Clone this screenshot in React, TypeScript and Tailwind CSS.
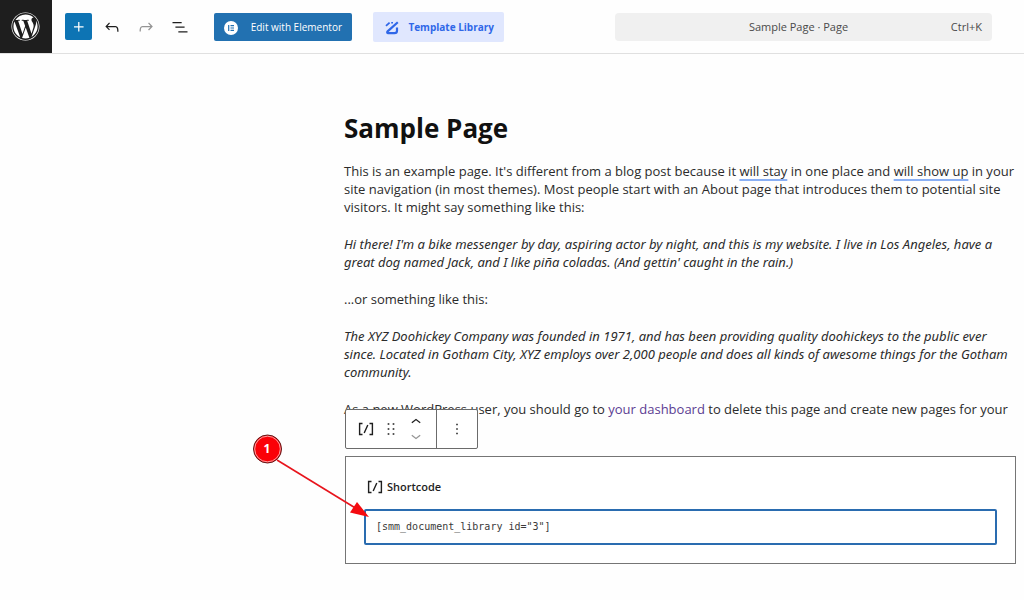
import type { ReactNode } from "react"
import { FaWordpress } from "react-icons/fa"

type IconProps = {
  path: string
  className?: string
}

const icons = {
  plus: "M11 12.5V17.5H12.5V12.5H17.5V11H12.5V6H11V11H6V12.5H11Z",
  undo: "M18.3 11.7c-.6-.6-1.4-.9-2.3-.9H6.7l2.9-3.3-1.1-1-4.5 5L8.5 16l1-1-2.7-2.7H16c.5 0 .9.2 1.3.5 1 1 1 3.4 1 4.5v.3h1.5v-.2c0-1.5 0-4.3-1.5-5.7z",
  redo: "M15.6 6.5l-1.1 1 2.9 3.3H8c-.9 0-1.7.3-2.3.9-1.4 1.5-1.4 4.2-1.4 5.6v.2h1.5v-.3c0-1.1 0-3.5 1-4.5.3-.3.7-.5 1.3-.5h9.2L14.5 15l1.1 1.1 4.6-4.6-4.6-5z",
  listView: "M3 6h11v1.5H3V6Zm3.5 5.5h11V13h-11v-1.5ZM21 17H10v1.5h11V17Z",
  drag: "M8 7h2V5H8v2zm0 6h2v-2H8v2zm0 6h2v-2H8v2zm6-14v2h2V5h-2zm0 8h2v-2h-2v2zm0 6h2v-2h-2v2z",
  up: "M6.5 12.4L12 8l5.5 4.4-.9 1.2L12 10l-4.5 3.6-1-1.2z",
  down: "M17.5 11.6L12 16l-5.5-4.4.9-1.2L12 14l4.5-3.6 1 1.2z",
  more: "M13 19h-2v-2h2v2zm0-6h-2v-2h2v2zm0-6h-2V5h2v2z",
}

function Icon({ path, className = "size-5" }: IconProps) {
  return (
    <svg viewBox="0 0 24 24" fill="currentColor" className={className} aria-hidden="true">
      <path d={path} />
    </svg>
  )
}

function ShortcodeIcon() {
  return (
    <svg viewBox="0 0 16 14" fill="none" stroke="currentColor" strokeWidth="1.4" className="h-3.5 w-4" aria-hidden="true">
      <path d="M4.5 1.5H1.6v11h2.9M11.5 1.5h2.9v11h-2.9M6.2 11l3.6-8" />
    </svg>
  )
}

function ElementorIcon() {
  return (
    <svg viewBox="0 0 14 14" className="size-3.5" aria-hidden="true">
      <circle cx="7" cy="7" r="7" fill="#fff" />
      <path d="M4.700 4v6M6.500 4.600h3.500M6.500 7h3.500M6.500 9.400h3.500" stroke="#2271b1" strokeWidth="1.2" />
    </svg>
  )
}

function TemplateIcon() {
  return (
    <svg viewBox="0 0 14 14" fill="none" stroke="currentColor" className="size-3.5" aria-hidden="true">
      <path d="M1 4.800L4.600 1.600" strokeWidth="1.800" />
      <path d="M6.200 1.800h1.800" strokeWidth="1.600" />
      <path d="M12.800 1.200L2.600 10.400c-.8.8-.4 1.800.6 1.800h6.200c1.600 0 2.600-1 2.600-2.400V6.600" strokeWidth="2.200" />
    </svg>
  )
}

function Paragraph({ children, italic = false }: { children: ReactNode; italic?: boolean }) {
  return <p className={italic ? "font-['Noto_Sans',sans-serif] italic" : ""}>{children}</p>
}

function Flagged({ children }: { children: ReactNode }) {
  return (
    <span className="underline decoration-[#8ab0f5] decoration-2 underline-offset-3 [text-decoration-skip-ink:none]">
      {children}
    </span>
  )
}

function Header() {
  return (
    <header className="flex h-[54px] items-center border-b border-[#e0e0e0]">
      <a href="#" aria-label="View Pages" className="flex w-[52px] shrink-0 items-center justify-center self-stretch bg-[#1e1e1e] pr-0.5 text-white">
        <FaWordpress className="size-[29px]" />
      </a>

      <div className="ml-[13px] flex items-center gap-3.5">
        <button type="button" aria-label="Block Inserter" className="-mr-1 flex size-[27px] items-center justify-center rounded-xs bg-[#0d74b4] text-white">
          <Icon path={icons.plus} />
        </button>
        <button type="button" aria-label="Undo" className="text-[#1e1e1e]">
          <Icon path={icons.undo} />
        </button>
        <button type="button" aria-label="Redo" className="text-[#949494]">
          <Icon path={icons.redo} />
        </button>
        <button type="button" aria-label="Document Overview" className="text-[#1e1e1e]">
          <Icon path={icons.listView} />
        </button>
      </div>

      <button type="button" className="ml-6 flex h-7 w-[138px] shrink-0 items-center justify-between rounded-xs bg-[#2271b1] px-2.5 pt-0.5 text-[10px] text-white">
        <ElementorIcon />
        Edit with Elementor
      </button>
      <button type="button" className="ml-[21px] flex h-[30px] w-[131px] shrink-0 items-center justify-between rounded-xs bg-[#e0e7fe] pt-0.5 pr-2.5 pl-3 text-[10px] font-bold text-[#2f67e8]">
        <TemplateIcon />
        Template Library
      </button>

      <button type="button" className="mr-8 ml-[111px] grid h-7 flex-1 grid-cols-[1fr_auto_1fr] items-center rounded-sm bg-[#f0f0f0] pt-0.5 pr-2.5 text-[11px] text-[#4a4a4a]">
        <span className="col-start-2">Sample Page · Page</span>
        <span className="text-right">Ctrl+K</span>
      </button>
    </header>
  )
}

function BlockToolbar() {
  return (
    <div className="absolute bottom-full -left-px mb-2 flex h-10 w-[133px] rounded-xs border border-[#6b6b6b] bg-white text-[#1e1e1e]">
      <div className="flex flex-1 items-center border-r border-[#6b6b6b] pl-3">
        <button type="button" aria-label="Shortcode">
          <ShortcodeIcon />
        </button>
        <button type="button" aria-label="Drag" className="ml-[7px]">
          <Icon path={icons.drag} />
        </button>
        <div className="ml-[5px] flex flex-col">
          <button type="button" aria-label="Move up" className="flex h-3.5 items-center overflow-hidden">
            <Icon path={icons.up} />
          </button>
          <button type="button" aria-label="Move down" className="flex h-3.5 items-center overflow-hidden text-[#949494]">
            <Icon path={icons.down} />
          </button>
        </div>
      </div>
      <button type="button" aria-label="Options" className="flex w-10 items-center justify-center">
        <Icon path={icons.more} className="size-[18px]" />
      </button>
    </div>
  )
}

// numbered pointer that hangs off the left edge of the block
function StepMarker() {
  return (
    <div className="pointer-events-none absolute -top-[25px] -left-[94px] h-[90px] w-[120px]">
      <svg viewBox="0 0 120 90" className="absolute inset-0 size-full" aria-hidden="true">
        <path d="M25 28L105 77" stroke="#e8141c" strokeWidth="1.6" />
        <path d="M117 85L98 80.500L105 70Z" fill="#f40b10" />
        <circle cx="15.500" cy="17" r="14" fill="#fb0007" stroke="#5c1a1a" />
        <circle cx="15.500" cy="17" r="12.800" fill="none" stroke="#ffc9c9" strokeWidth=".8" />
      </svg>
      <span className="absolute top-[3px] left-px flex size-7 items-center justify-center text-xs font-bold text-white">1</span>
    </div>
  )
}

function ShortcodeBlock() {
  return (
    <section className="relative mt-[38px] ml-px border border-[#757575] bg-white px-[18px] pt-[22px] pb-[18px]">
      <BlockToolbar />
      <label htmlFor="shortcode" className="ml-[3px] flex h-4 items-center gap-1 text-[11px] font-semibold text-[#1e1e1e]">
        <ShortcodeIcon />
        Shortcode
      </label>
      <textarea
        id="shortcode"
        rows={1}
        spellCheck={false}
        defaultValue={'[smm_document_library id="3"]'}
        className="mt-3.5 block h-9 w-full resize-none rounded-xs border-2 border-[#2a6cb0] bg-white px-2.5 py-2 font-['DejaVu_Sans_Mono',monospace] text-[10px] leading-4 text-[#3a3a3a] outline-none"
      />
      <StepMarker />
    </section>
  )
}

export default function App() {
  return (
    <div className="min-h-screen bg-[#fefefe] font-['Open_Sans','Noto_Sans',sans-serif]">
      <Header />
      <main className="pt-14 pr-2 pl-[344px]">
        <h1 className="text-[26px] leading-9 font-bold text-[#111]">Sample Page</h1>
        <div className="mt-4 flex flex-col gap-[19px] text-[13px] leading-[18px] whitespace-nowrap text-[#2b2b2b]">
          <Paragraph>
            This is an example page. It's different from a blog post because it <Flagged>will stay</Flagged> in one place and{" "}
            <Flagged>will show up</Flagged> in your
            <br />
            site navigation (in most themes). Most people start with an About page that introduces them to potential site
            <br />
            visitors. It might say something like this:
          </Paragraph>
          <Paragraph italic>
            Hi there! I'm a bike messenger by day, aspiring actor by night, and this is my website. I live in Los Angeles, have a
            <br />
            great dog named Jack, and I like piña coladas. (And gettin' caught in the rain.)
          </Paragraph>
          <Paragraph>...or something like this:</Paragraph>
          <Paragraph italic>
            The XYZ Doohickey Company was founded in 1971, and has been providing quality doohickeys to the public ever
            <br />
            since. Located in Gotham City, XYZ employs over 2,000 people and does all kinds of awesome things for the Gotham
            <br />
            community.
          </Paragraph>
          <Paragraph>
            As a new WordPress user, you should go to <a href="#" className="text-[#5b3c92]">your dashboard</a> to delete this page and create new pages for your
          </Paragraph>
        </div>
        <ShortcodeBlock />
      </main>
    </div>
  )
}
